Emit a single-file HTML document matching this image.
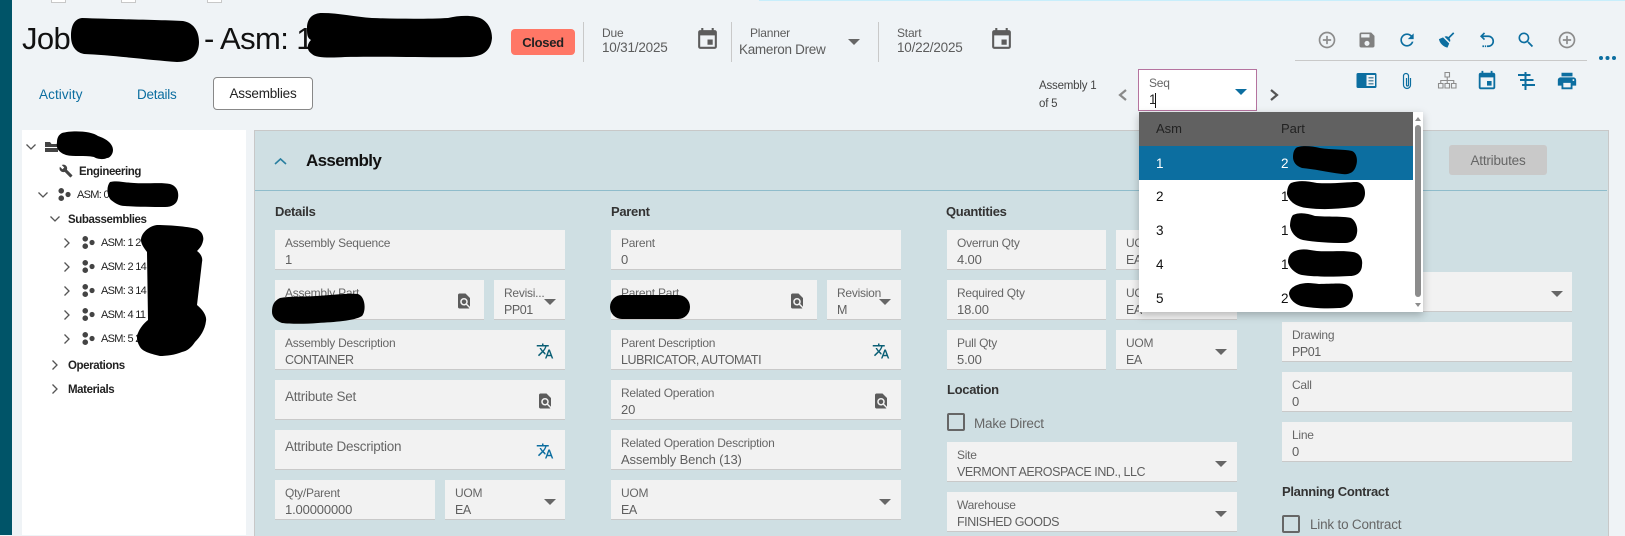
<!DOCTYPE html>
<html>
<head>
<meta charset="utf-8">
<style>
html,body{margin:0;padding:0}
body{width:1625px;height:535px;position:relative;overflow:hidden;background:#eff3f6;font-family:"Liberation Sans",sans-serif;color:#5c5c5c}
.t{position:absolute;white-space:nowrap;line-height:16px;font-size:13px;letter-spacing:-.2px}
.f{position:absolute;height:39px;background:#f2f2f2;border-bottom:1px solid #c9c9c9}
.f label{position:absolute;left:10px;top:5px;line-height:16px;font-size:12px;letter-spacing:-.25px;color:#666;white-space:nowrap}
.f b{position:absolute;left:10px;top:22px;line-height:16px;font-size:13px;letter-spacing:-.15px;font-weight:400;color:#5f5f5f;white-space:nowrap}
.f b.c{font-size:12.500px;letter-spacing:-.45px}
.f label.big{font-size:13.500px;top:9px}
.h{font-weight:700;color:#333;font-size:13px;letter-spacing:-.3px}
.tr{font-size:11px;color:#222;letter-spacing:-.7px}
.trb{font-size:11.500px;font-weight:700;color:#222;letter-spacing:-.4px}
.sep{position:absolute;width:1px;top:22px;height:40px;background:#c9c9c9}
svg.a{position:absolute;left:0;top:0;z-index:2}
.dd{position:absolute;left:1139px;top:112px;width:284px;height:200px;background:#fff;box-shadow:0 3px 8px rgba(0,0,0,.25);z-index:5}
.dd .hd{position:absolute;left:0;top:0;width:274px;height:34px;background:#616161}
.dd .sel{position:absolute;left:0;top:34px;width:274px;height:34px;background:#0c6ea0}
.dd .t{font-size:13.500px;letter-spacing:0;color:#111}
.dd .th{font-size:13px;color:#222}
</style>
</head>
<body>
<svg width="0" height="0" style="position:absolute">
<defs>
<symbol id="add" viewBox="0 0 24 24"><path d="M13 7h-2v4H7v2h4v4h2v-4h4v-2h-4V7zm-1-5C6.480 2 2 6.480 2 12s4.480 10 10 10 10-4.480 10-10S17.520 2 12 2zm0 18c-4.410 0-8-3.590-8-8s3.590-8 8-8 8 3.590 8 8-3.590 8-8 8z"/></symbol>
<symbol id="save" viewBox="0 0 24 24"><path d="M17 3H5c-1.110 0-2 .9-2 2v14c0 1.100.89 2 2 2h14c1.100 0 2-.9 2-2V7l-4-4zm-5 16c-1.660 0-3-1.340-3-3s1.340-3 3-3 3 1.340 3 3-1.340 3-3 3zm3-10H5V5h10v4z"/></symbol>
<symbol id="refresh" viewBox="0 0 24 24"><path d="M17.650 6.350C16.200 4.900 14.210 4 12 4c-4.420 0-7.990 3.580-7.990 8s3.570 8 7.990 8c3.730 0 6.840-2.550 7.730-6h-2.080c-.82 2.330-3.040 4-5.650 4-3.310 0-6-2.690-6-6s2.690-6 6-6c1.660 0 3.140.69 4.220 1.780L13 11h7V4l-2.350 2.350z"/></symbol>
<symbol id="broom" viewBox="0 0 24 24"><path d="M19.360 2.720l1.420 1.420-5.720 5.710c1.070 1.540 1.220 3.390.32 4.590L9.060 8.120c1.200-.9 3.050-.75 4.590.32l5.710-5.720zM5.930 17.570c-2.010-2.010-3.240-4.410-3.580-6.650l4.880-2.090 7.440 7.440-2.090 4.880c-2.240-.34-4.640-1.570-6.650-3.580z"/></symbol>
<symbol id="undo" viewBox="0 0 24 24"><path d="M9 3.500L5 7.500l4 4M5.500 7.500h8a6 6 0 0 1 0 12H12" fill="none" stroke="currentColor" stroke-width="2"/><path d="M6.500 18.500h2v2h-2zM9.500 18.500h1.500v2H9.500z"/></symbol>
<symbol id="search" viewBox="0 0 24 24"><path d="M15.500 14h-.79l-.28-.27C15.410 12.590 16 11.110 16 9.500 16 5.910 13.090 3 9.500 3S3 5.910 3 9.500 5.910 16 9.500 16c1.610 0 3.090-.59 4.230-1.570l.27.28v.79l5 4.990L20.490 19l-4.990-5zm-6 0C7.010 14 5 11.990 5 9.500S7.010 5 9.500 5 14 7.010 14 9.500 11.990 14 9.500 14z"/></symbol>
<symbol id="cal" viewBox="0 0 24 24"><path d="M17 12h-5v5h5v-5zM16 1v2H8V1H6v2H5c-1.110 0-1.990.9-1.990 2L3 19c0 1.100.89 2 2 2h14c1.100 0 2-.9 2-2V5c0-1.100-.9-2-2-2h-1V1h-2zm3 18H5V8h14v11z"/></symbol>
<symbol id="print" viewBox="0 0 24 24"><path d="M19 8H5c-1.660 0-3 1.340-3 3v6h4v4h12v-4h4v-6c0-1.660-1.340-3-3-3zm-3 11H8v-5h8v5zm3-7c-.55 0-1-.45-1-1s.45-1 1-1 1 .45 1 1-.45 1-1 1zm-1-9H6v4h12V3z"/></symbol>
<symbol id="tran" viewBox="0 0 24 24"><path d="M12.870 15.070l-2.540-2.510.03-.03c1.740-1.940 2.980-4.170 3.710-6.530H17V4h-7V2H8v2H1v1.990h11.170C11.500 7.920 10.440 9.750 9 11.350 8.070 10.320 7.300 9.190 6.690 8h-2c.73 1.630 1.730 3.170 2.980 4.560l-5.090 5.020L4 19l5-5 3.110 3.110.76-2.040zM18.500 10h-2L12 22h2l1.120-3h4.750L21 22h2l-4.500-12zm-2.620 7l1.620-4.330L19.120 17h-3.240z"/></symbol>
<symbol id="find" viewBox="0 0 24 24"><path d="M20 19.590V8l-6-6H6c-1.100 0-1.990.9-1.990 2L4 20c0 1.100.89 2 1.990 2H18c.45 0 .85-.15 1.190-.4l-4.430-4.430c-.8.52-1.740.83-2.760.83-2.760 0-5-2.240-5-5s2.240-5 5-5 5 2.240 5 5c0 1.020-.31 1.960-.83 2.750L20 19.590zM9 13c0 1.660 1.340 3 3 3s3-1.340 3-3-1.340-3-3-3-3 1.340-3 3z"/></symbol>
<symbol id="wrench" viewBox="0 0 24 24"><path d="M22.700 19l-9.100-9.100c.9-2.300.4-5-1.500-6.900-2-2-5-2.400-7.400-1.300L9 6 6 9 1.600 4.700C.4 7.100.9 10.100 2.900 12.100c1.900 1.900 4.600 2.400 6.900 1.500l9.100 9.100c.4.4 1 .4 1.400 0l2.300-2.300c.5-.4.5-1.100.1-1.400z"/></symbol>
<symbol id="asm" viewBox="0 0 14 14"><circle cx="3.500" cy="3" r="3"/><circle cx="3.500" cy="11" r="3"/><circle cx="10.800" cy="7" r="2.800"/></symbol>
<symbol id="down" viewBox="0 0 12 12"><path d="M1.500 3.500L6 8l4.500-4.500" fill="none" stroke="currentColor" stroke-width="1.300"/></symbol>
<symbol id="right" viewBox="0 0 12 12"><path d="M3.500 1.500L8 6l-4.500 4.500" fill="none" stroke="currentColor" stroke-width="1.300"/></symbol>
<symbol id="tri" viewBox="0 0 12 6"><path d="M0 0h12L6 6z"/></symbol>
</defs>
</svg>

<!-- frame -->
<div style="position:absolute;left:0;top:0;width:12px;height:535px;background:#005468"></div>
<div style="position:absolute;left:759px;top:0;width:866px;height:1px;background:#c8eefb"></div>
<div style="position:absolute;left:51px;top:-3px;width:13px;height:4px;background:#fff;border:1px solid #c8c8c8"></div>
<div style="position:absolute;left:121px;top:-3px;width:13px;height:4px;background:#fff;border:1px solid #c8c8c8"></div>
<div style="position:absolute;left:207px;top:-3px;width:13px;height:4px;background:#fff;border:1px solid #c8c8c8"></div>

<!-- header -->
<div class="t" style="left:22px;top:19px;line-height:40px;font-size:31px;color:#111;letter-spacing:-.6px">Job</div>
<div class="t" style="left:204px;top:19px;line-height:40px;font-size:31px;color:#111;letter-spacing:-.6px">- Asm: 1</div>
<div style="position:absolute;left:511px;top:29px;width:64px;height:26px;background:#ff7766;border-radius:4px;text-align:center;line-height:27px;font-size:13px;font-weight:700;color:#222;letter-spacing:-.3px">Closed</div>
<div class="sep" style="left:583px"></div>
<div class="sep" style="left:731px"></div>
<div class="sep" style="left:878px"></div>
<div class="t" style="left:602px;top:25px;font-size:12px">Due</div>
<div class="t" style="left:602px;top:40px;font-size:13.500px">10/31/2025</div>
<div class="t" style="left:750px;top:25px;font-size:12px">Planner</div>
<div class="t" style="left:739px;top:42px;font-size:13.500px;letter-spacing:-.3px">Kameron Drew</div>
<div class="t" style="left:897px;top:25px;font-size:12px">Start</div>
<div class="t" style="left:897px;top:40px;font-size:13.500px">10/22/2025</div>
<div class="t" style="left:1039px;top:78px;font-size:11.500px;color:#444">Assembly 1</div>
<div class="t" style="left:1039px;top:96px;font-size:11.500px;color:#444">of 5</div>

<!-- tabs -->
<div class="t" style="left:39px;top:87px;color:#0c6ea0;font-size:13.500px;letter-spacing:.1px">Activity</div>
<div class="t" style="left:137px;top:87px;color:#0c6ea0;font-size:13.500px;letter-spacing:-.25px">Details</div>
<div style="position:absolute;left:213px;top:77px;width:98px;height:31px;background:#fff;border:1px solid #888;border-radius:4px;text-align:center;line-height:31px;font-size:13.500px;color:#222;letter-spacing:-.2px">Assemblies</div>

<!-- toolbar line -->
<div style="position:absolute;left:1295px;top:60px;width:292px;height:1px;background:#c9c9c9"></div>

<!-- seq -->
<div style="position:absolute;left:1138px;top:69px;width:117px;height:40px;background:#fff;border:1px solid #b5739f"></div>
<div class="t" style="left:1149px;top:75px;font-size:12px;color:#666">Seq</div>
<div class="t" style="left:1149px;top:92px;font-size:13.500px;color:#222">1</div>
<div style="position:absolute;left:1155px;top:93px;width:1px;height:15px;background:#111"></div>

<!-- tree -->
<div style="position:absolute;left:22px;top:130px;width:224px;height:405px;background:#fff"></div>
<div class="t trb" style="left:79px;top:164px">Engineering</div>
<div class="t tr" style="left:77px;top:187px">ASM: 0</div>
<div class="t trb" style="left:68px;top:212px">Subassemblies</div>
<div class="t tr" style="left:101px;top:235px">ASM: 1 2</div>
<div class="t tr" style="left:101px;top:259px">ASM: 2 14</div>
<div class="t tr" style="left:101px;top:283px">ASM: 3 14</div>
<div class="t tr" style="left:101px;top:307px">ASM: 4 11</div>
<div class="t tr" style="left:101px;top:331px">ASM: 5 2</div>
<div class="t trb" style="left:68px;top:358px">Operations</div>
<div class="t trb" style="left:68px;top:382px">Materials</div>

<!-- main panel -->
<div style="position:absolute;left:254px;top:130px;width:1353px;height:405px;background:#cfdfe3;border:1px solid #c8c8c8;border-bottom:0"></div>
<div style="position:absolute;left:255px;top:190px;width:1352px;height:1px;background:#8fbccb"></div>
<div class="t" style="left:306px;top:151px;font-size:17px;font-weight:700;color:#111;letter-spacing:-.65px;line-height:20px">Assembly</div>
<div style="position:absolute;left:1449px;top:145px;width:98px;height:30px;background:#c9c9c9;border-radius:3px;text-align:center;line-height:32px;font-size:13.500px;color:#666;letter-spacing:-.2px">Attributes</div>

<div class="t h" style="left:275px;top:204px">Details</div>
<div class="t h" style="left:611px;top:204px">Parent</div>
<div class="t h" style="left:946px;top:204px">Quantities</div>
<div class="t h" style="left:947px;top:382px">Location</div>
<div class="t h" style="left:1282px;top:484px">Planning Contract</div>

<!-- col 1 -->
<div class="f" style="left:275px;top:230px;width:290px"><label>Assembly Sequence</label><b>1</b></div>
<div class="f" style="left:275px;top:280px;width:209px"><label>Assembly Part</label></div>
<div class="f" style="left:494px;top:280px;width:71px"><label>Revisi...</label><b class="c">PP01</b></div>
<div class="f" style="left:275px;top:330px;width:290px"><label>Assembly Description</label><b class="c">CONTAINER</b></div>
<div class="f" style="left:275px;top:380px;width:290px"><label class="big">Attribute Set</label></div>
<div class="f" style="left:275px;top:430px;width:290px"><label class="big">Attribute Description</label></div>
<div class="f" style="left:275px;top:480px;width:160px"><label>Qty/Parent</label><b>1.00000000</b></div>
<div class="f" style="left:445px;top:480px;width:120px"><label>UOM</label><b class="c">EA</b></div>

<!-- col 2 -->
<div class="f" style="left:611px;top:230px;width:290px"><label>Parent</label><b>0</b></div>
<div class="f" style="left:611px;top:280px;width:206px"><label>Parent Part</label></div>
<div class="f" style="left:827px;top:280px;width:74px"><label>Revision</label><b class="c">M</b></div>
<div class="f" style="left:611px;top:330px;width:290px"><label>Parent Description</label><b class="c">LUBRICATOR, AUTOMATI</b></div>
<div class="f" style="left:611px;top:380px;width:290px"><label>Related Operation</label><b>20</b></div>
<div class="f" style="left:611px;top:430px;width:290px"><label>Related Operation Description</label><b>Assembly Bench (13)</b></div>
<div class="f" style="left:611px;top:480px;width:290px"><label>UOM</label><b class="c">EA</b></div>

<!-- col 3 -->
<div class="f" style="left:947px;top:230px;width:159px"><label>Overrun Qty</label><b>4.00</b></div>
<div class="f" style="left:1116px;top:230px;width:121px"><label>UOM</label><b class="c">EA</b></div>
<div class="f" style="left:947px;top:280px;width:159px"><label>Required Qty</label><b>18.00</b></div>
<div class="f" style="left:1116px;top:280px;width:121px"><label>UOM</label><b class="c">EA</b></div>
<div class="f" style="left:947px;top:330px;width:159px"><label>Pull Qty</label><b>5.00</b></div>
<div class="f" style="left:1116px;top:330px;width:121px"><label>UOM</label><b class="c">EA</b></div>
<div style="position:absolute;left:947px;top:413px;width:14px;height:14px;border:2px solid #666;border-radius:2px"></div>
<div class="t" style="left:974px;top:416px;font-size:13.500px;color:#666">Make Direct</div>
<div class="f" style="left:947px;top:442px;width:290px"><label>Site</label><b class="c">VERMONT AEROSPACE IND., LLC</b></div>
<div class="f" style="left:947px;top:492px;width:290px"><label>Warehouse</label><b class="c">FINISHED GOODS</b></div>

<!-- col 4 -->
<div class="f" style="left:1282px;top:272px;width:290px"></div>
<div class="f" style="left:1282px;top:322px;width:290px"><label>Drawing</label><b class="c">PP01</b></div>
<div class="f" style="left:1282px;top:372px;width:290px"><label>Call</label><b>0</b></div>
<div class="f" style="left:1282px;top:422px;width:290px"><label>Line</label><b>0</b></div>
<div style="position:absolute;left:1282px;top:515px;width:14px;height:14px;border:2px solid #666;border-radius:2px"></div>
<div class="t" style="left:1310px;top:517px;font-size:13.500px;color:#666">Link to Contract</div>

<!-- icons + redaction -->
<svg class="a" width="1625" height="535" viewBox="0 0 1625 535">
<g fill="#5c5c5c">
<use href="#cal" x="695" y="27" width="25" height="25"/>
<use href="#cal" x="989" y="27" width="25" height="25"/>
</g>
<g fill="#666">
<use href="#tri" x="848" y="39" width="12" height="6"/>
<use href="#tri" x="544" y="299" width="12" height="6"/>
<use href="#tri" x="544" y="499" width="12" height="6"/>
<use href="#tri" x="879" y="299" width="12" height="6"/>
<use href="#tri" x="879" y="499" width="12" height="6"/>
<use href="#tri" x="1215" y="349" width="12" height="6"/>
<use href="#tri" x="1215" y="461" width="12" height="6"/>
<use href="#tri" x="1215" y="511" width="12" height="6"/>
<use href="#tri" x="1551" y="291" width="12" height="6"/>
</g>
<use href="#tri" x="1235" y="89" width="12" height="6" fill="#0c6ea0"/>
<path d="M1126 90l-6 5 6 5" fill="none" stroke="#8a8a8a" stroke-width="2.200"/>
<path d="M1271 90l6 5-6 5" fill="none" stroke="#555" stroke-width="2.200"/>
<path d="M275 164l5.500-5 5.500 5" fill="none" stroke="#2a7fa0" stroke-width="1.600"/>

<!-- toolbar row 1 -->
<use href="#add" x="1317" y="30" width="20" height="20" fill="#8c8c8c"/>
<use href="#save" x="1357" y="30" width="20" height="20" fill="#808080"/>
<g fill="#0c6ea0" color="#0c6ea0">
<use href="#refresh" x="1397" y="30" width="20" height="20"/>
<use href="#broom" x="1437" y="30" width="20" height="20"/>
<use href="#undo" x="1477" y="30" width="20" height="20"/>
<use href="#search" x="1516" y="30" width="20" height="20"/>
<circle cx="1601" cy="58" r="2"/><circle cx="1607.500" cy="58" r="2"/><circle cx="1614" cy="58" r="2"/>
</g>
<use href="#add" x="1557" y="30" width="20" height="20" fill="#8c8c8c"/>

<!-- toolbar row 2 -->
<g fill="#0c6ea0">
<path d="M1358 73h17a1.500 1.500 0 0 1 1.500 1.500v12a1.500 1.500 0 0 1-1.500 1.500h-17a1.500 1.500 0 0 1-1.500-1.500v-12a1.500 1.500 0 0 1 1.500-1.500z"/>
<path d="M1366.500 75h8.500v11h-8.500z" fill="#eff3f6"/>
<path d="M1368.500 77h5v1.500h-5zM1368.500 80h5v1.500h-5zM1368.500 83h5v1.500h-5z" fill="#5f8fa8"/>
<use href="#cal" x="1476" y="70" width="22" height="22"/>
<use href="#print" x="1556" y="70" width="22" height="22"/>
<path d="M1524.500 72h2v18h-2zM1518 74h6.500v2H1518zM1526.500 74h4v2h-4zM1520 79h4.500v2H1520zM1526.500 79h7v2h-7zM1522 84h2.500v2H1522zM1526.500 84h8.500v2h-8.500z"/>
</g>
<path d="M1410.500 78v7a3.500 3.500 0 0 1-7 0v-9a2.500 2.500 0 0 1 5 0v9a1 1 0 0 1-2 0v-7" fill="none" stroke="#0c6ea0" stroke-width="1.200"/>
<g fill="none" stroke="#8c8c8c" stroke-width="1.100">
<path d="M1445 72.500h4.500v4.500H1445zM1438.500 83.500h4.500v4.500h-4.500zM1445 83.500h4.500v4.500H1445zM1451.500 83.500h4.500v4.500h-4.500zM1447.250 77v6.500M1440.750 83.500v-3h13v3"/>
</g>

<!-- field icons -->
<g fill="#5c5c5c">
<use href="#find" x="455" y="292" width="18" height="18"/>
<use href="#find" x="536" y="392" width="18" height="18"/>
<use href="#find" x="788" y="292" width="18" height="18"/>
<use href="#find" x="872" y="392" width="18" height="18"/>
</g>
<use href="#tran" x="536" y="342" width="18" height="18" fill="#0a5f75"/>
<use href="#tran" x="536" y="442" width="18" height="18" fill="#0c6ea0"/>
<use href="#tran" x="872" y="342" width="18" height="18" fill="#0a5f75"/>

<!-- tree icons -->
<g color="#555">
<use href="#down" x="25" y="141" width="12" height="12"/>
<use href="#down" x="37" y="189" width="12" height="12"/>
<use href="#down" x="49" y="213" width="12" height="12"/>
<use href="#right" x="61" y="237" width="12" height="12"/>
<use href="#right" x="61" y="261" width="12" height="12"/>
<use href="#right" x="61" y="285" width="12" height="12"/>
<use href="#right" x="61" y="309" width="12" height="12"/>
<use href="#right" x="61" y="333" width="12" height="12"/>
<use href="#right" x="49" y="359" width="12" height="12"/>
<use href="#right" x="49" y="383" width="12" height="12"/>
</g>
<g fill="#444">
<path d="M45 142h5l1.500 2H58v3H45zM45 148h13v4H45z"/>
<use href="#wrench" x="59" y="164" width="14" height="14"/>
<use href="#asm" x="58" y="188" width="13" height="13"/>
<use href="#asm" x="82" y="236" width="13" height="13"/>
<use href="#asm" x="82" y="260" width="13" height="13"/>
<use href="#asm" x="82" y="284" width="13" height="13"/>
<use href="#asm" x="82" y="308" width="13" height="13"/>
<use href="#asm" x="82" y="332" width="13" height="13"/>
</g>

<!-- redactions -->
<g fill="#000">
<path d="M82 18C110 19 160 20 183 21C195 23 199 33 199 42C199 54 192 62 177 62C150 60 110 55 84 54C74 52 71 44 71 36C71 26 74 19 82 18z"/>
<path d="M322 13C340 13 355 17 372 18C400 19 430 19 448 18C460 15 475 15 482 19C490 24 492 32 492 38C491 50 484 56 470 57C440 58 380 56 345 57C330 58 315 58 312 54C306 50 307 44 311 40C307 38 307 34 307 28C307 18 313 13 322 13z"/>
<path d="M62 133c10-3 30-2 36 3 9 3 15 8 15 14 0 4-3 8-6 8-4 2-10 1-13-1-10-2-20 0-28-2-8-3-10-7-9-13 0-3 1-7 5-9z"/>
<path d="M110 182c8-2 16 1 24 1 12 1 28-1 36 1 7 2 9 8 8 14-1 6-6 9-13 9-14 0-28 0-40-1-6 0-10-3-14-6-4-4-5-13-1-18z"/>
<path d="M141 240C141 233 149 226 157 225C172 225 190 227 197 229C203 232 204 238 203 241C202 246 199 249 197 251C201 254 203 258 202 262L197 305C203 310 207 316 206 321C205 330 200 337 195 342C191 348 187 351 182 352C175 355 166 356 160 356C152 354 143 352 140 347C137 342 136 337 138 333C140 328 144 323 148 320L147 252C144 248 141 244 141 240z"/>
<path d="M280 298c10-2 26-1 36-2 14-1 34-3 42-2 8 3 8 18 4 22-8 5-28 6-44 7-12 1-28 1-36 0-6-2-10-6-10-11 0-7 2-11 8-14z"/>
<rect x="610" y="295" width="80" height="24" rx="12"/>
</g>
</svg>

<!-- dropdown -->
<div class="dd">
  <div class="hd"></div>
  <div class="sel"></div>
  <div class="t th" style="left:17px;top:9px">Asm</div>
  <div class="t th" style="left:142px;top:9px">Part</div>
  <div class="t" style="left:17px;top:44px;color:#fff">1</div>
  <div class="t" style="left:142px;top:44px;color:#fff">2</div>
  <div class="t" style="left:17px;top:77px">2</div>
  <div class="t" style="left:142px;top:77px">1</div>
  <div class="t" style="left:17px;top:111px">3</div>
  <div class="t" style="left:142px;top:111px">1</div>
  <div class="t" style="left:17px;top:145px">4</div>
  <div class="t" style="left:142px;top:145px">1</div>
  <div class="t" style="left:17px;top:179px">5</div>
  <div class="t" style="left:142px;top:179px">2</div>
  <div style="position:absolute;left:276px;top:13px;width:6px;height:172px;background:#8c8c8c;border-radius:3px"></div>
  <svg width="284" height="200" style="position:absolute;left:0;top:0">
    <path d="M276 9h6l-3-4zM276 191h6l-3 4z" fill="#8c8c8c"/>
    <g fill="#000">
      <path d="M157 36c4-3 16-2 24 0 12 2 24 1 32 3 5 2 6 10 4 15-2 7-8 9-14 8-16-2-28-5-40-6-6-2-9-6-9-11 0-4 1-7 3-9z"/>
      <path d="M152 71c8-3 16-2 26 0 16 1 30-1 40-1 6 1 8 6 8 11 0 8-6 13-12 14-16 2-30 3-46 1-10-1-18-6-20-14 0-4 1-9 4-11z"/>
      <path d="M154 103c6-3 14-2 22 1 12 1 28 0 36 2 5 3 7 10 6 15-1 7-6 10-12 10-16 0-30-1-42-3-8-2-12-8-13-14 0-4 1-9 3-11z"/>
      <path d="M156 139c8-3 14-1 22 0 12 1 26-1 36 1 7 1 10 7 9 13 0 6-4 11-12 11-18 1-36 1-48-1-6-1-13-7-14-13 0-5 2-9 7-11z"/>
      <path d="M158 173c8-3 14-2 22-1 10 0 20-1 25 0 6 1 9 6 9 12-1 7-6 12-14 12-14 1-28 0-38-2-6-2-11-6-12-12 0-4 3-7 8-9z"/>
    </g>
  </svg>
</div>
</body>
</html>
